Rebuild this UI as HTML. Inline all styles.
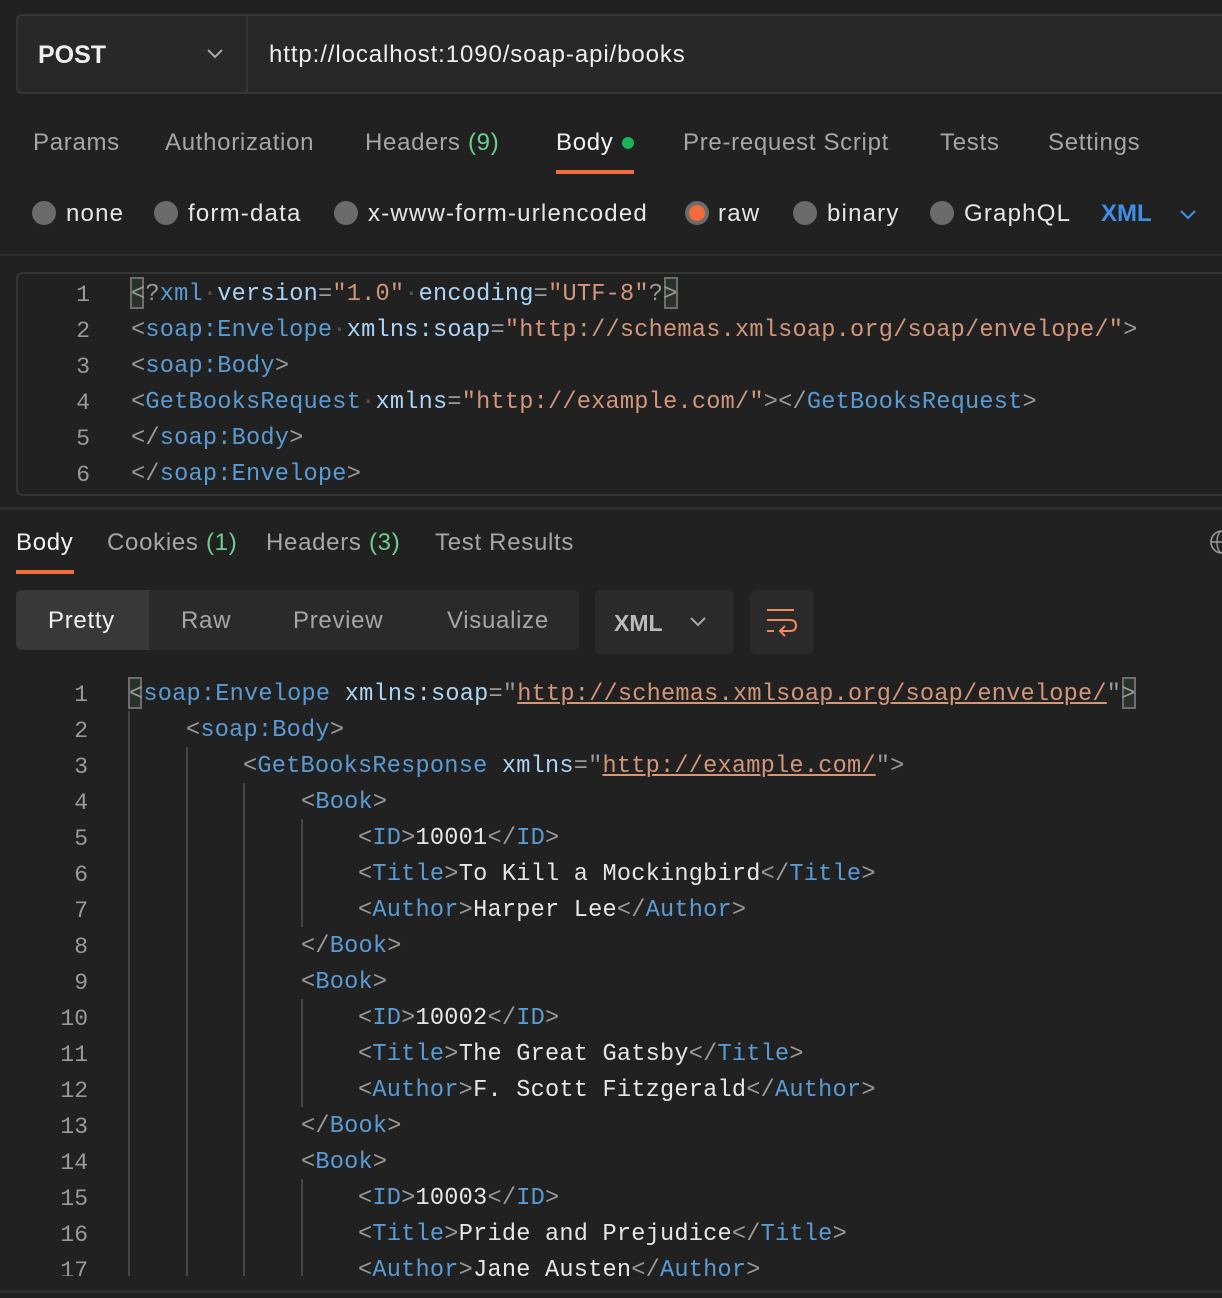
<!DOCTYPE html>
<html><head><meta charset="utf-8"><style>
*{margin:0;padding:0;box-sizing:border-box}
body{width:1222px;height:1298px;background:#212121;position:relative;overflow:hidden;font-family:"Liberation Sans",sans-serif;color:#a6a6a6}
.abs{position:absolute}
.code{position:absolute;font-family:"Liberation Mono",monospace;font-size:23.6px;letter-spacing:0.22px;line-height:36px;height:36px;white-space:pre;color:#e6e6e6;margin-top:2px}
.ln{position:absolute;font-family:"Liberation Mono",monospace;font-size:23px;line-height:36px;height:36px;color:#9a9a9a;text-align:right;width:60px;margin-top:2px}
.p{color:#9a9a9a}.t{color:#5a9bd3}.a{color:#a9d4f5}.s{color:#d2967a}.d{color:#555}
.u{text-decoration:underline;text-decoration-color:#d2967a}
.g{position:absolute;width:2px;background:#454545}
.tab{position:absolute;font-size:24px;top:127px;line-height:32px;letter-spacing:0.7px}
.rad{position:absolute;top:201px;width:24px;height:24px;border-radius:50%;background:#6b6b6b}
.rl{position:absolute;top:199px;font-size:24px;color:#e6e6e6;line-height:30px;letter-spacing:1.2px}
.br{position:absolute;width:14px;height:32px;border:2px solid #6d6d6d;background:#2a332a}
</style></head><body>
<!-- URL bar -->
<div class="abs" style="left:16px;top:14px;width:1230px;height:80px;border:2px solid #363636;border-radius:6px;background:#282828"></div>
<div class="abs" style="left:246px;top:16px;width:2px;height:76px;background:#363636"></div>
<div class="abs" style="left:38px;top:39px;font-size:25px;font-weight:bold;color:#eee;line-height:32px">POST</div>
<svg class="abs" style="left:205px;top:46px" width="20" height="14"><path d="M3 4 L10 11 L17 4" fill="none" stroke="#aaa" stroke-width="2"/></svg>
<div class="abs" style="left:269px;top:39px;font-size:24px;color:#eee;line-height:32px;letter-spacing:0.9px">http://localhost:1090/soap-api/books</div>
<!-- tabs -->
<div class="tab" style="left:33px">Params</div>
<div class="tab" style="left:165px">Authorization</div>
<div class="tab" style="left:365px">Headers <span style="color:#6ccf8a">(9)</span></div>
<div class="tab" style="left:556px;color:#f0f0f0">Body</div>
<div class="abs" style="left:622px;top:137px;width:12px;height:12px;border-radius:50%;background:#19b35a"></div>
<div class="abs" style="left:556px;top:170px;width:78px;height:4px;background:#f26b3a"></div>
<div class="tab" style="left:683px">Pre-request Script</div>
<div class="tab" style="left:940px">Tests</div>
<div class="tab" style="left:1048px">Settings</div>
<!-- radios -->
<div class="rad" style="left:32px"></div><div class="rl" style="left:66px">none</div>
<div class="rad" style="left:154px"></div><div class="rl" style="left:188px">form-data</div>
<div class="rad" style="left:334px"></div><div class="rl" style="left:368px">x-www-form-urlencoded</div>
<div class="rad" style="left:685px;background:#f26b3a;border:4px solid #6b6b6b"></div><div class="rl" style="left:718px">raw</div>
<div class="rad" style="left:793px"></div><div class="rl" style="left:827px">binary</div>
<div class="rad" style="left:930px"></div><div class="rl" style="left:964px">GraphQL</div>
<div class="rl" style="left:1101px;color:#3f8fe8;font-weight:bold;letter-spacing:0">XML</div>
<svg class="abs" style="left:1178px;top:207px" width="20" height="14"><path d="M3 4 L10 11 L17 4" fill="none" stroke="#3f8fe8" stroke-width="2"/></svg>
<div class="abs" style="left:0;top:254px;width:1222px;height:2px;background:#2c2c2c"></div>
<!-- request editor -->
<div class="abs" style="left:16px;top:272px;width:1230px;height:224px;border:2px solid #333;border-radius:6px"></div>
<div class="abs" style="left:0;top:507px;width:1222px;height:3px;background:#2c2c2c"></div>
<div class="ln" style="left:30px;top:275px">1</div>
<div class="ln" style="left:30px;top:311px">2</div>
<div class="ln" style="left:30px;top:347px">3</div>
<div class="ln" style="left:30px;top:383px">4</div>
<div class="ln" style="left:30px;top:419px">5</div>
<div class="ln" style="left:30px;top:455px">6</div>
<div class="br" style="left:130px;top:277px"></div>
<div class="br" style="left:664px;top:277px"></div>
<div class="code" style="left:131px;top:275px"><span class="p">&lt;?</span><span class="t">xml</span><span class="d">·</span><span class="a">version</span><span class="p">=</span><span class="s">"1.0"</span><span class="d">·</span><span class="a">encoding</span><span class="p">=</span><span class="s">"UTF-8"</span><span class="p">?&gt;</span></div>
<div class="code" style="left:131px;top:311px"><span class="p">&lt;</span><span class="t">soap:Envelope</span><span class="d">·</span><span class="a">xmlns:soap</span><span class="p">=</span><span class="s">"http://schemas.xmlsoap.org/soap/envelope/"</span><span class="p">&gt;</span></div>
<div class="code" style="left:131px;top:347px"><span class="p">&lt;</span><span class="t">soap:Body</span><span class="p">&gt;</span></div>
<div class="code" style="left:131px;top:383px"><span class="p">&lt;</span><span class="t">GetBooksRequest</span><span class="d">·</span><span class="a">xmlns</span><span class="p">=</span><span class="s">"http://example.com/"</span><span class="p">&gt;&lt;/</span><span class="t">GetBooksRequest</span><span class="p">&gt;</span></div>
<div class="code" style="left:131px;top:419px"><span class="p">&lt;/</span><span class="t">soap:Body</span><span class="p">&gt;</span></div>
<div class="code" style="left:131px;top:455px"><span class="p">&lt;/</span><span class="t">soap:Envelope</span><span class="p">&gt;</span></div>
<!-- response tabs -->
<div class="tab" style="left:16px;top:527px;color:#f0f0f0">Body</div>
<div class="abs" style="left:16px;top:570px;width:58px;height:4px;background:#f26b3a"></div>
<div class="tab" style="left:107px;top:527px">Cookies <span style="color:#6ccf8a">(1)</span></div>
<div class="tab" style="left:266px;top:527px">Headers <span style="color:#6ccf8a">(3)</span></div>
<div class="tab" style="left:435px;top:527px">Test Results</div>
<svg class="abs" style="left:1208px;top:528px" width="20" height="28"><circle cx="14" cy="14" r="11" fill="none" stroke="#999" stroke-width="1.6"/><ellipse cx="14" cy="14" rx="5" ry="11" fill="none" stroke="#999" stroke-width="1.4"/><path d="M3 14 H25" stroke="#999" stroke-width="1.4"/></svg>
<!-- segmented -->
<div class="abs" style="left:16px;top:590px;width:563px;height:60px;background:#2a2a2a;border-radius:6px"></div>
<div class="abs" style="left:16px;top:590px;width:133px;height:60px;background:#383838;border-radius:6px 0 0 6px"></div>
<div class="abs" style="left:48px;top:606px;font-size:24px;color:#f0f0f0;line-height:30px;letter-spacing:0.7px">Pretty</div>
<div class="abs" style="left:181px;top:606px;font-size:24px;line-height:30px;letter-spacing:0.7px">Raw</div>
<div class="abs" style="left:293px;top:606px;font-size:24px;line-height:30px;letter-spacing:0.7px">Preview</div>
<div class="abs" style="left:447px;top:606px;font-size:24px;line-height:30px;letter-spacing:0.7px">Visualize</div>
<div class="abs" style="left:595px;top:590px;width:139px;height:64px;background:#2a2a2a;border-radius:6px"></div>
<div class="abs" style="left:614px;top:608px;font-size:23px;font-weight:bold;color:#bbb;line-height:30px">XML</div>
<svg class="abs" style="left:688px;top:614px" width="20" height="14"><path d="M3 4 L10 11 L17 4" fill="none" stroke="#aaa" stroke-width="2"/></svg>
<div class="abs" style="left:750px;top:590px;width:64px;height:64px;background:#2a2a2a;border-radius:6px"></div>
<svg class="abs" style="left:765px;top:606px" width="34" height="32"><path d="M2 4 H29 M2 14 H25 Q31 14 31 19.5 Q31 25 25 25 H16 M20 20 L15 25 L20 30 M2 25 H9" fill="none" stroke="#f08a5d" stroke-width="2"/></svg>
<!-- response code -->
<div class="g" style="left:128px;top:711px;height:565px"></div>
<div class="g" style="left:186px;top:747px;height:529px"></div>
<div class="g" style="left:243px;top:783px;height:493px"></div>
<div class="g" style="left:301px;top:819px;height:108px"></div>
<div class="g" style="left:301px;top:999px;height:108px"></div>
<div class="g" style="left:301px;top:1179px;height:97px"></div>
<div class="abs" style="left:0;top:1290px;width:1222px;height:3px;background:#2c2c2c"></div>
<div class="br" style="left:128px;top:677px"></div>
<div class="br" style="left:1122px;top:677px"></div>
<div style="position:absolute;left:0;top:0;width:1222px;height:1276px;overflow:hidden">
<div class="ln" style="left:28px;top:675px">1</div>
<div class="ln" style="left:28px;top:711px">2</div>
<div class="ln" style="left:28px;top:747px">3</div>
<div class="ln" style="left:28px;top:783px">4</div>
<div class="ln" style="left:28px;top:819px">5</div>
<div class="ln" style="left:28px;top:855px">6</div>
<div class="ln" style="left:28px;top:891px">7</div>
<div class="ln" style="left:28px;top:927px">8</div>
<div class="ln" style="left:28px;top:963px">9</div>
<div class="ln" style="left:28px;top:999px">10</div>
<div class="ln" style="left:28px;top:1035px">11</div>
<div class="ln" style="left:28px;top:1071px">12</div>
<div class="ln" style="left:28px;top:1107px">13</div>
<div class="ln" style="left:28px;top:1143px">14</div>
<div class="ln" style="left:28px;top:1179px">15</div>
<div class="ln" style="left:28px;top:1215px">16</div>
<div class="ln" style="left:28px;top:1251px">17</div>
<div class="code" style="left:129px;top:675px"><span class="p">&lt;</span><span class="t">soap:Envelope</span> <span class="a">xmlns:soap</span><span class="p">="</span><span class="s u">http://schemas.xmlsoap.org/soap/envelope/</span><span class="p">"&gt;</span></div>
<div class="code" style="left:186px;top:711px"><span class="p">&lt;</span><span class="t">soap:Body</span><span class="p">&gt;</span></div>
<div class="code" style="left:243px;top:747px"><span class="p">&lt;</span><span class="t">GetBooksResponse</span> <span class="a">xmlns</span><span class="p">="</span><span class="s u">http://example.com/</span><span class="p">"&gt;</span></div>
<div class="code" style="left:301px;top:783px"><span class="p">&lt;</span><span class="t">Book</span><span class="p">&gt;</span></div>
<div class="code" style="left:358px;top:819px"><span class="p">&lt;</span><span class="t">ID</span><span class="p">&gt;</span>10001<span class="p">&lt;/</span><span class="t">ID</span><span class="p">&gt;</span></div>
<div class="code" style="left:358px;top:855px"><span class="p">&lt;</span><span class="t">Title</span><span class="p">&gt;</span>To Kill a Mockingbird<span class="p">&lt;/</span><span class="t">Title</span><span class="p">&gt;</span></div>
<div class="code" style="left:358px;top:891px"><span class="p">&lt;</span><span class="t">Author</span><span class="p">&gt;</span>Harper Lee<span class="p">&lt;/</span><span class="t">Author</span><span class="p">&gt;</span></div>
<div class="code" style="left:301px;top:927px"><span class="p">&lt;/</span><span class="t">Book</span><span class="p">&gt;</span></div>
<div class="code" style="left:301px;top:963px"><span class="p">&lt;</span><span class="t">Book</span><span class="p">&gt;</span></div>
<div class="code" style="left:358px;top:999px"><span class="p">&lt;</span><span class="t">ID</span><span class="p">&gt;</span>10002<span class="p">&lt;/</span><span class="t">ID</span><span class="p">&gt;</span></div>
<div class="code" style="left:358px;top:1035px"><span class="p">&lt;</span><span class="t">Title</span><span class="p">&gt;</span>The Great Gatsby<span class="p">&lt;/</span><span class="t">Title</span><span class="p">&gt;</span></div>
<div class="code" style="left:358px;top:1071px"><span class="p">&lt;</span><span class="t">Author</span><span class="p">&gt;</span>F. Scott Fitzgerald<span class="p">&lt;/</span><span class="t">Author</span><span class="p">&gt;</span></div>
<div class="code" style="left:301px;top:1107px"><span class="p">&lt;/</span><span class="t">Book</span><span class="p">&gt;</span></div>
<div class="code" style="left:301px;top:1143px"><span class="p">&lt;</span><span class="t">Book</span><span class="p">&gt;</span></div>
<div class="code" style="left:358px;top:1179px"><span class="p">&lt;</span><span class="t">ID</span><span class="p">&gt;</span>10003<span class="p">&lt;/</span><span class="t">ID</span><span class="p">&gt;</span></div>
<div class="code" style="left:358px;top:1215px"><span class="p">&lt;</span><span class="t">Title</span><span class="p">&gt;</span>Pride and Prejudice<span class="p">&lt;/</span><span class="t">Title</span><span class="p">&gt;</span></div>
<div class="code" style="left:358px;top:1251px"><span class="p">&lt;</span><span class="t">Author</span><span class="p">&gt;</span>Jane Austen<span class="p">&lt;/</span><span class="t">Author</span><span class="p">&gt;</span></div>
</div>
</body></html>
